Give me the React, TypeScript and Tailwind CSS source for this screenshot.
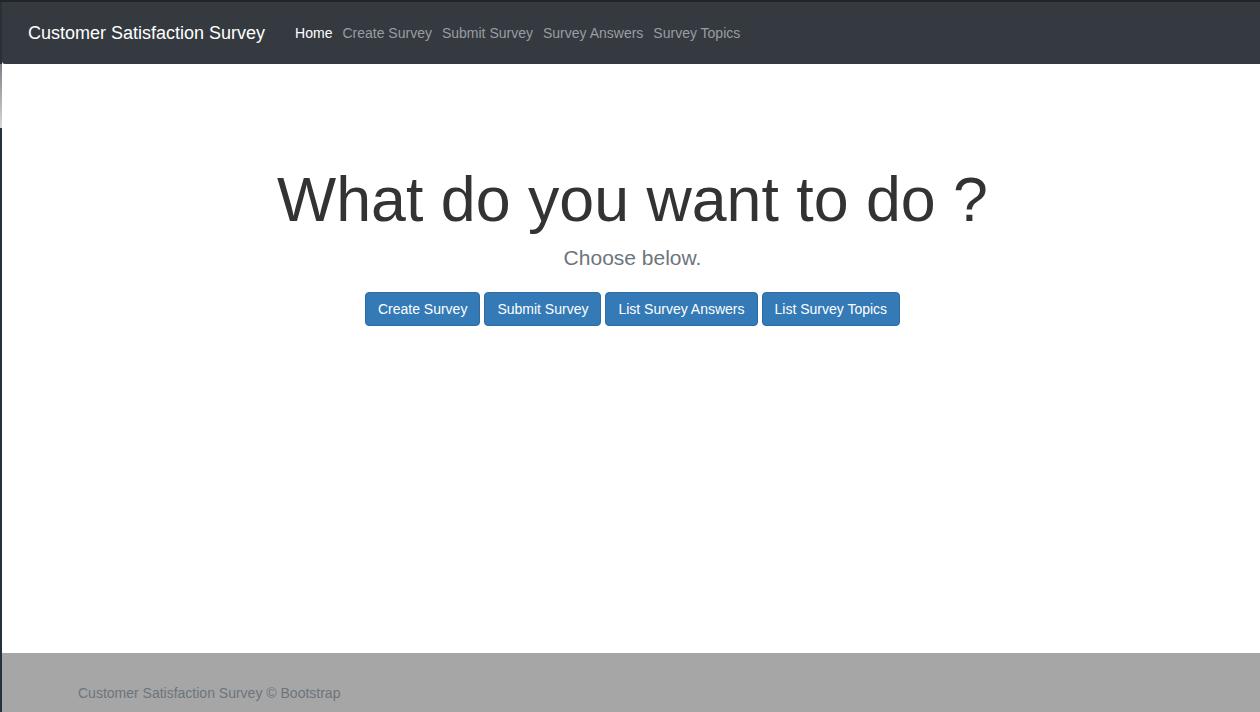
const links = ["Create Survey", "Submit Survey", "Survey Answers", "Survey Topics"];
const actions = ["Create Survey", "Submit Survey", "List Survey Answers", "List Survey Topics"];

export default function App() {
  return (
    <div className="flex flex-col h-[712px] w-[1260px] overflow-hidden bg-[#252b33] font-['Liberation_Sans',Arial,sans-serif]">
      <div className="h-[2px] bg-[#222426] shrink-0" />
      <div className="flex flex-1 min-h-0">
        <div className="w-[2px] shrink-0 flex flex-col">
          <div className="h-[62px] bg-[#2a3038]" />
          <div className="h-[64px] bg-gradient-to-b from-[#7d8288] to-[#d6d8da]" />
          <div className="flex-1 bg-[#27303b]" />
        </div>
        <div className="flex-1 flex flex-col bg-white">
          <nav className="h-[62px] shrink-0 bg-[#343a40] rounded-bl-[3px] flex items-center pl-[26px]">
            <a className="text-[18px] text-white mr-[30px]">Customer Satisfaction Survey</a>
            <ul className="flex gap-[10px] text-[14px]">
              <li className="text-white">Home</li>
              {links.map((l) => (
                <li key={l} className="text-[#9a9da1]">{l}</li>
              ))}
            </ul>
          </nav>
          <main className="flex-1 flex flex-col items-center pt-[101px] pl-[3px]">
            <h1 className="text-[62.7px] leading-[69px] text-[#333333]">What do you want to do ?</h1>
            <p className="mt-[9px] text-[21px] leading-[30px] text-[#6c757d]">Choose below.</p>
            <div className="mt-[19px] flex gap-[4px]">
              {actions.map((a) => (
                <button
                  key={a}
                  className="h-[34px] px-[12px] text-[14px] leading-[20px] text-white bg-[#337ab7] border border-[#2e6da4] rounded-[4px]"
                >
                  {a}
                </button>
              ))}
            </div>
          </main>
          <footer className="h-[59px] shrink-0 bg-[#a6a6a6] pt-[30px] pl-[76px]">
            <p className="text-[14px] leading-[20px] text-[#6c757d]">Customer Satisfaction Survey © Bootstrap</p>
          </footer>
        </div>
      </div>
    </div>
  );
}
